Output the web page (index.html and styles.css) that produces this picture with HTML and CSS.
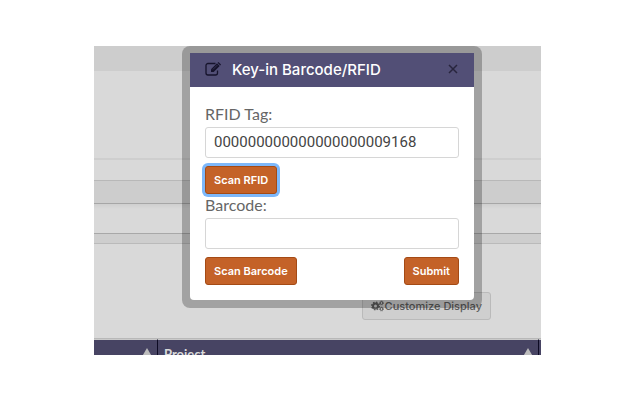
FILE: index.html
```
<!DOCTYPE html>
<html lang="en">
<head>
    <meta charset="UTF-8">
    <meta name="viewport" content="width=device-width, initial-scale=1.0">
    <title>Key-in Barcode/RFID</title>
    <link rel="stylesheet" href="styles.css">
</head>
<body>
    <main class="screen">
        <div class="top-bar"></div>
        <div class="summary"></div>
        <div class="spacer"></div>
        <div class="panel-heading"></div>
        <div class="panel-body"></div>
        <div class="panel-footer"></div>
        <div class="toolbar">
            <button type="button" class="customize">
                <svg class="cogs" viewBox="0 0 26 24" aria-hidden="true">
                    <circle cx="9" cy="12" r="5" fill="none" stroke="currentColor" stroke-width="4"/>
                    <circle cx="9" cy="12" r="7.5" fill="none" stroke="currentColor" stroke-width="3" stroke-dasharray="3 2.9"/>
                    <circle cx="21" cy="6" r="2.7" fill="none" stroke="currentColor" stroke-width="2"/>
                    <circle cx="21" cy="6" r="4" fill="none" stroke="currentColor" stroke-width="1.6" stroke-dasharray="1.7 1.4"/>
                    <circle cx="21" cy="18" r="2.7" fill="none" stroke="currentColor" stroke-width="2"/>
                    <circle cx="21" cy="18" r="4" fill="none" stroke="currentColor" stroke-width="1.6" stroke-dasharray="1.7 1.4"/>
                </svg>
                Customize Display
            </button>
        </div>
        <div class="table-wrap">
            <table class="grid">
                <thead>
                    <tr>
                        <th class="col-first"><span class="sort"></span></th>
                        <th class="col-project"><div class="th-inner">Project <span class="sort"></span></div></th>
                        <th class="col-last"></th>
                    </tr>
                </thead>
            </table>
        </div>

        <div class="modal" role="dialog" aria-labelledby="modalTitle">
            <div class="modal-header">
                <svg class="edit-icon" viewBox="0 0 16 14" aria-hidden="true">
                    <path d="M10.500 1.500H3A2 2 0 0 0 1 3.500V11A2 2 0 0 0 3 13H10.500A2 2 0 0 0 12.500 11V8.500" fill="none" stroke="currentColor" stroke-width="1.300"/>
                    <path d="M6 7.300L12 1.300L14.700 4L8.700 10H6Z" fill="currentColor"/>
                    <path d="M12.600 .8L13.400 0L16 2.600L15.200 3.400Z" fill="currentColor"/>
                    <path d="M8 7.400L12.300 3.100" stroke="#524f76" stroke-width=".5"/>
                </svg>
                <h1 id="modalTitle">Key-in Barcode/RFID</h1>
                <button type="button" class="close" aria-label="Close">
                    <svg viewBox="0 0 10 10" aria-hidden="true">
                        <path d="M1 1L9 9M9 1L1 9" stroke="currentColor" stroke-width="1.500"/>
                    </svg>
                </button>
            </div>
            <form class="modal-body">
                <label for="rfid">RFID Tag:</label>
                <input type="text" id="rfid" name="rfid" value="000000000000000000009168">
                <div class="actions">
                    <button type="button" class="btn focused">Scan RFID</button>
                </div>
                <label for="barcode">Barcode:</label>
                <input type="text" id="barcode" name="barcode">
                <div class="actions">
                    <button type="button" class="btn">Scan Barcode</button>
                    <button type="submit" class="btn">Submit</button>
                </div>
            </form>
        </div>
    </main>
</body>
</html>
```
FILE: styles.css
```
* {
    box-sizing: border-box;
}

body {
    margin: 0;
    padding: 46px 99px 0 94px;
    background: #fff;
    font-family: Lato, "Liberation Sans", sans-serif;
}

button,
input {
    font-family: inherit;
}

.screen {
    position: relative;
    background: #d9d9d9;
}

.top-bar {
    height: 25px;
    background: #cdcdcd;
}

.summary {
    height: 89px;
    border-bottom: 2px solid #cecece;
}

.spacer {
    height: 20px;
}

.panel-heading {
    height: 24px;
    background: #cdcdcd;
    border-top: 1px solid #b8b8b8;
    border-bottom: 1px solid #a6a6a6;
}

.panel-body {
    height: 29px;
    background: linear-gradient(#cfcfcf, #d9d9d9 5px);
}

.panel-footer {
    height: 11px;
    background: #cecece;
    border-top: 1px solid #a8a8a8;
    border-bottom: 1px solid #bababa;
}

.toolbar {
    display: flex;
    justify-content: flex-end;
    padding: 48px 50px 18px;
}

.customize {
    display: flex;
    align-items: center;
    gap: 1px;
    height: 28px;
    padding: 0 8px;
    border: 1px solid #bababa;
    border-radius: 3px;
    background: #cfcfcf;
    color: #5c5c5c;
    font-family: Inter, sans-serif;
    font-size: 11px;
    font-weight: 500;
    white-space: nowrap;
}

.cogs {
    width: 13px;
    height: 12px;
}

.table-wrap {
    height: 17px;
    border-top: 1px solid #b8b8b8;
    overflow: hidden;
}

.grid {
    width: 100%;
    table-layout: fixed;
    border-collapse: separate;
    border-spacing: 0;
    background: #474463;
}

.grid th {
    height: 28px;
    padding: 0 3px 0 6px;
    border-top: 1px solid #c9c9c9;
    border-right: 1px solid #0d0b24;
    color: #dadada;
    font-size: 13px;
    text-align: left;
}

.grid .col-first {
    width: 64px;
}

.grid .col-last {
    width: 2px;
    padding: 0;
    border-right: 0;
}

.th-inner {
    display: flex;
    align-items: center;
    justify-content: space-between;
}

.sort {
    display: block;
    width: 14px;
    margin-left: auto;
    border: 7px solid transparent;
    border-top: 0;
    border-bottom: 12px solid #bdbdbd;
}

.modal {
    position: absolute;
    top: 0;
    left: 88px;
    width: 300px;
    padding: 7px 8px 8px;
    border-radius: 8px;
    background: rgba(0, 0, 0, 0.25);
}

.modal-header {
    display: flex;
    align-items: center;
    height: 34px;
    padding: 0 15px 2px;
    background: #524f76;
}

.edit-icon {
    width: 16px;
    height: 14px;
    color: #16132c;
}

.modal-header h1 {
    flex: 1;
    margin: 0 0 0 11px;
    color: #fff;
    font-family: Inter, sans-serif;
    font-size: 15px;
    font-weight: 500;
}

.close {
    display: flex;
    padding: 0;
    border: 0;
    background: none;
    color: #28253d;
    cursor: pointer;
}

.close svg {
    width: 12px;
    height: 10px;
}

.modal-body {
    padding: 17px 15px 15px;
    border-radius: 0 0 4px 4px;
    background: #fff;
}

.modal-body label {
    display: block;
    color: #666;
    font-size: 16px;
    line-height: 20px;
}

.modal-body input {
    display: block;
    width: 100%;
    height: 31px;
    margin-top: 3px;
    padding: 0 8px 1px;
    border: 1px solid #d6d6d6;
    border-radius: 3px;
    color: #444;
    font-family: Roboto, sans-serif;
    font-size: 15px;
}

.actions {
    display: flex;
    justify-content: space-between;
    padding-top: 8px;
}

.actions + label {
    margin-top: 1px;
}

.btn {
    height: 28px;
    padding: 0 8px;
    border: 1px solid #a44a15;
    border-radius: 3px;
    background: #c46228;
    color: #fff;
    font-family: Inter, sans-serif;
    font-size: 11px;
    font-weight: 600;
    cursor: pointer;
}

.btn.focused {
    box-shadow: 0 0 0 3px #7db8fb;
}
```
